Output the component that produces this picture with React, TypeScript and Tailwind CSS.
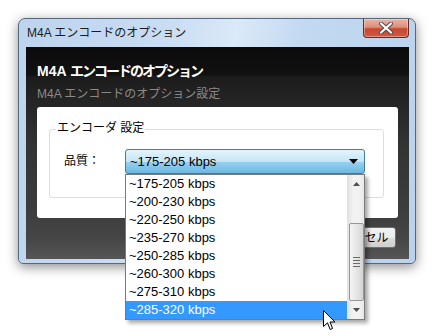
import React from "react";

const rates = [
  "~175-205 kbps",
  "~200-230 kbps",
  "~220-250 kbps",
  "~235-270 kbps",
  "~250-285 kbps",
  "~260-300 kbps",
  "~275-310 kbps",
  "~285-320 kbps",
];

const CloseButton = () => (
  <div className="self-start mr-[6px] h-[19px] w-[46px] rounded-b-[4px] border border-t-0 border-[#6b2a20] bg-[linear-gradient(to_bottom,#eab3a4_0%,#df8f7c_45%,#c8462f_55%,#cf5a42_100%)] flex items-center justify-center shadow-[inset_0_0_0_1px_rgba(255,255,255,0.35)]">
    <svg width="14" height="12" viewBox="0 0 14 12">
      <path d="M2 1.5 L12 10.5 M12 1.5 L2 10.5" stroke="#4a4a4a" strokeWidth="4" strokeLinecap="round" />
      <path d="M2 1.5 L12 10.5 M12 1.5 L2 10.5" stroke="#ffffff" strokeWidth="2.2" strokeLinecap="round" />
    </svg>
  </div>
);

const Scrollbar = () => (
  <div className="w-[17px] h-full bg-[linear-gradient(to_right,#e3e3e3,#f2f2f2_30%,#f2f2f2_70%,#e8e8e8)] border-l border-[#e2e2e2] flex flex-col items-center">
    <div className="h-[17px] w-full flex items-center justify-center">
      <svg width="7" height="4" viewBox="0 0 7 4">
        <path d="M0 4 L3.5 0 L7 4 Z" fill="#505050" />
      </svg>
    </div>
    <div className="h-[31px]" />
    <div className="w-[15px] h-[78px] rounded-[2px] border border-[#979797] bg-[linear-gradient(to_right,#f4f4f4,#e6e6e6_50%,#d4d4d4)] flex flex-col items-center justify-center gap-[2px]">
      <div className="w-[7px] h-[1px] bg-[#6a6a6a]" />
      <div className="w-[7px] h-[1px] bg-[#6a6a6a]" />
      <div className="w-[7px] h-[1px] bg-[#6a6a6a]" />
      <div className="w-[7px] h-[1px] bg-[#6a6a6a]" />
    </div>
    <div className="flex-1 w-full flex items-center justify-center">
      <svg width="7" height="4" viewBox="0 0 7 4">
        <path d="M0 0 L7 0 L3.5 4 Z" fill="#505050" />
      </svg>
    </div>
  </div>
);

const Dropdown = () => (
  <div className="absolute left-0 top-full w-[240px] h-[146px] bg-white border border-[#7a7a7a] flex shadow-[3px_3px_4px_rgba(0,0,0,0.35)]">
    <div className="flex-1 flex flex-col">
      {rates.map((r, i) => (
        <div
          key={r}
          className={
            i === rates.length - 1
              ? "h-[18px] pl-[3px] flex items-center text-[13px] text-white bg-[#3399ff]"
              : "h-[18px] pl-[3px] flex items-center text-[13px] text-black"
          }
        >
          {r}
        </div>
      ))}
    </div>
    <Scrollbar />
  </div>
);

const Cursor = () => (
  <svg className="absolute left-[323px] top-[310px]" width="13" height="21" viewBox="0 0 13 21">
    <path
      d="M0.5 0.5 L0.5 16.5 L4.5 12.8 L7.2 19.5 L9.6 18.5 L7 12 L12 12 Z"
      fill="#ffffff"
      stroke="#000000"
      strokeWidth="1"
      strokeLinejoin="round"
    />
  </svg>
);

export default function App() {
  return (
    <div className="relative w-[438px] h-[336px] bg-white overflow-hidden pt-[18px] pl-[18px] font-['Liberation_Sans','Noto_Sans_CJK_JP',sans-serif]">
      <div className="w-[398px] h-[246px] rounded-t-[7px] rounded-b-[5px] border border-[#56687e] bg-[linear-gradient(100deg,#bdd4ee_0%,#c9ddf3_35%,#dbe9f8_50%,#c3d9f1_65%,#b9d2ed_100%)] shadow-[0_3px_12px_rgba(0,0,0,0.45)] flex flex-col">
        {/* title bar */}
        <div className="h-[28px] flex justify-between">
          <div className="pl-[8px] pt-[5px] text-[12px] leading-[18px] text-[#1b1b1b]">
            M4A エンコードのオプション
          </div>
          <CloseButton />
        </div>

        {/* client */}
        <div className="ml-[7px] w-[383px] h-[212px] flex flex-col bg-[linear-gradient(to_bottom,#0b0b0b_0px,#111111_28px,#1c1c1c_30px,#262626_58px,#343434_100px,#3c3c3c_160px,#454545_190px,#565656_212px)]">
          <div className="pl-[11px] pt-[14px] h-[34px] text-[14px] leading-[20px] font-bold text-white">
            M4A <span className="tracking-[-2px]">エンコードのオプション</span>
          </div>
          <div className="pl-[11px] mt-[4px] h-[18px] text-[12px] leading-[18px] text-[#8a8a8a]">
            M4A エンコードのオプション設定
          </div>

          <div className="mx-[11px] mt-[4px] h-[111px] rounded-[3px] bg-white pt-[22px] pl-[12px] pr-[14px]">
            <div className="relative h-[69px] rounded-[3px] border border-[#d5dfe5]">
              <div className="absolute -top-[10px] left-[6px] bg-white px-[1px] text-[12px] leading-[16px] text-black">
                エンコーダ 設定
              </div>
              <div className="flex items-start pt-[19px]">
                <div className="w-[75px] pl-[14px] pt-[3px] text-[12px] leading-[18px] text-black">
                  品質：
                </div>
                <div className="relative">
                  <div className="w-[240px] h-[25px] rounded-[3px] border border-[#3c7fb1] bg-[linear-gradient(to_bottom,#e5f4fc_0%,#c4e5f6_50%,#98d1ef_51%,#6cb8e2_100%)] flex items-center justify-between pl-[4px] pr-[6px]">
                    <span className="text-[13px] text-black">~175-205 kbps</span>
                    <svg width="9" height="5" viewBox="0 0 9 5">
                      <path d="M0 0 L9 0 L4.5 5 Z" fill="#000000" />
                    </svg>
                  </div>
                  <Dropdown />
                </div>
              </div>
            </div>
          </div>

          <div className="flex justify-end pr-[13px] mt-[9px]">
            <div className="w-[75px] h-[21px] rounded-[3px] border border-[#707070] bg-[linear-gradient(to_bottom,#f2f2f2_0%,#ebebeb_50%,#dddddd_51%,#cfcfcf_100%)] flex items-center justify-center text-[12px] text-black">
              キャンセル
            </div>
          </div>
        </div>
      </div>
      <Cursor />
    </div>
  );
}
